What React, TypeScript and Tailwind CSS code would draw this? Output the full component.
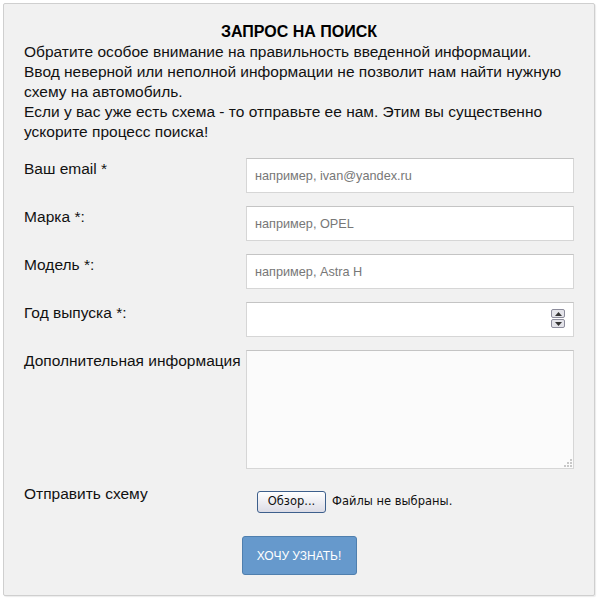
import React from 'react'

const fields = [
  { label: 'Ваш email *', placeholder: 'например, ivan@yandex.ru' },
  { label: 'Марка *:', placeholder: 'например, OPEL' },
  { label: 'Модель *:', placeholder: 'например, Astra H' },
]

const inputCls =
  'h-[35px] w-full border border-[#d6d6d6] border-t-[#c4c4c4] bg-white px-[8px] text-[12.7px] text-[#333] outline-none placeholder:text-[#777]'

function Spinner() {
  return (
    <div className="absolute right-[9px] top-[7px] flex flex-col gap-[1px]">
      <div className="flex h-[9px] w-[14px] items-center justify-center rounded-[2px] border border-[#8c8c9c] bg-[#e4e4ea]">
        <svg width="7" height="4" viewBox="0 0 7 4">
          <path d="M0 4 L3.5 0 L7 4 Z" fill="#333" />
        </svg>
      </div>
      <div className="flex h-[9px] w-[14px] items-center justify-center rounded-[2px] border border-[#8c8c9c] bg-[#e4e4ea]">
        <svg width="7" height="4" viewBox="0 0 7 4">
          <path d="M0 0 L3.5 4 L7 0 Z" fill="#333" />
        </svg>
      </div>
    </div>
  )
}

function Grip() {
  return (
    <svg className="absolute bottom-[2px] right-[2px]" width="9" height="9" viewBox="0 0 9 9">
      {[
        [7, 1],
        [4, 4],
        [7, 4],
        [1, 7],
        [4, 7],
        [7, 7],
      ].map(([x, y]) => (
        <rect key={`${x}-${y}`} x={x} y={y} width="2" height="2" fill="#c8c8c8" />
      ))}
    </svg>
  )
}

export default function App() {
  return (
    <div className="p-[3px] font-['Liberation_Sans',Arial,sans-serif] text-[#111]">
      <div className="w-[592px] rounded-[2px] border border-[#cfcfcf] bg-[#f1f1f1] px-[20px] pb-[20px] pt-[18px] shadow-[1px_1px_1px_rgba(0,0,0,0.08)]">
        {/* Header */}
        <h1 className="text-center text-[16px] font-bold leading-[20px] text-black">ЗАПРОС НА ПОИСК</h1>
        <p className="text-[15.5px] leading-[20px]">
          Обратите особое внимание на правильность введенной информации.
          <br />
          Ввод неверной или неполной информации не позволит нам найти нужную схему на автомобиль.
          <br />
          Если у вас уже есть схема - то отправьте ее нам. Этим вы существенно ускорите процесс поиска!
        </p>

        {/* Form */}
        <form className="mt-[16px] grid grid-cols-[222px_328px] gap-y-[13px]">
          {fields.map((f) => (
            <React.Fragment key={f.label}>
              <label className="pt-[1px] text-[15.5px] leading-[20px]">{f.label}</label>
              <input className={inputCls} placeholder={f.placeholder} />
            </React.Fragment>
          ))}

          <label className="pt-[1px] text-[15.5px] leading-[20px]">Год выпуска *:</label>
          <div className="relative">
            <input className={inputCls} />
            <Spinner />
          </div>

          <label className="pt-[1px] text-[15.5px] leading-[20px]">Дополнительная информация</label>
          <div className="relative h-[119px]">
            <textarea className="h-full w-full resize-none border border-[#d6d6d6] border-t-[#c4c4c4] bg-[#fbfbfb] p-[6px] text-[13px] outline-none" />
            <Grip />
          </div>

          <label className="mt-[2px] text-[15.5px] leading-[20px]">Отправить схему</label>
          <div className="mt-[9px] flex items-center pl-[11px] font-['DejaVu_Sans',Tahoma,sans-serif] text-[11.5px] text-[#111]">
            <button
              type="button"
              className="h-[22px] w-[69px] rounded-[3px] border border-[#3d5f8c] bg-gradient-to-b from-white to-[#dcdce6] text-[11.5px] text-[#111]"
            >
              Обзор...
            </button>
            <span className="ml-[6px]">Файлы не выбраны.</span>
          </div>
        </form>

        {/* Submit */}
        <div className="mt-[23px] flex justify-center">
          <button
            type="button"
            className="h-[39px] w-[115px] rounded-[3px] border border-[#4f7fae] bg-[#6699cc] text-[12px] uppercase text-white"
          >
            Хочу узнать!
          </button>
        </div>
      </div>
    </div>
  )
}
